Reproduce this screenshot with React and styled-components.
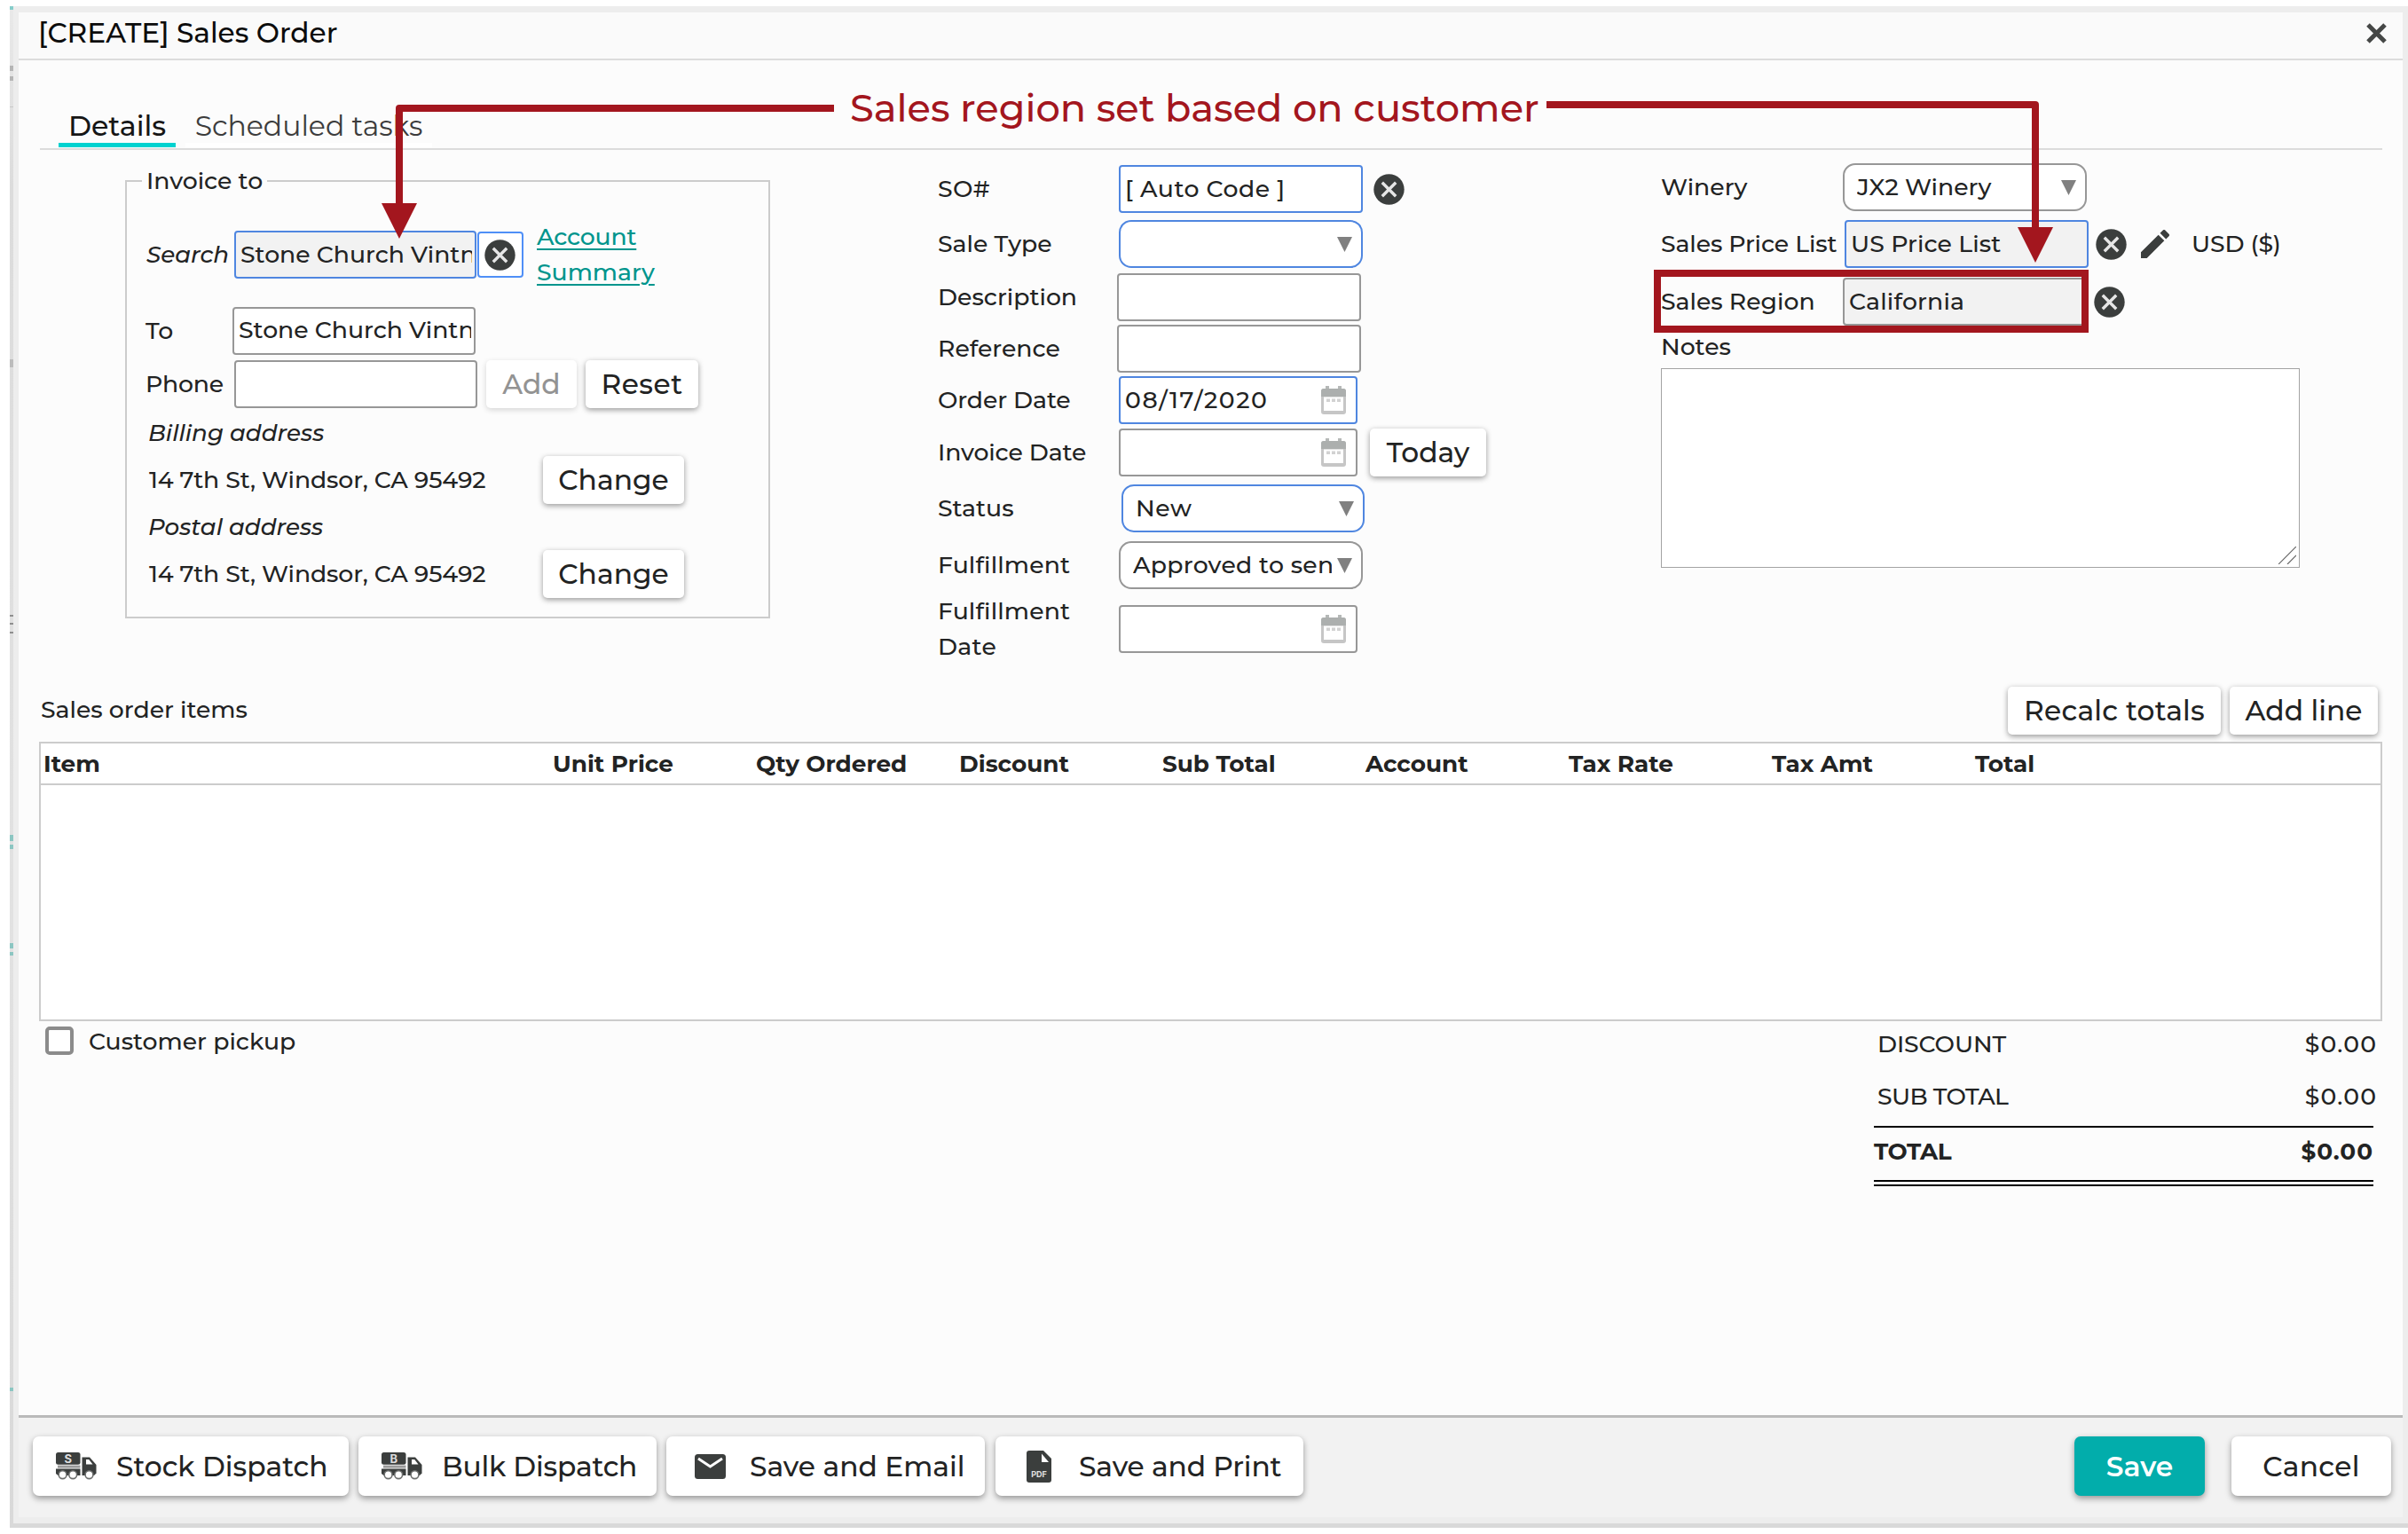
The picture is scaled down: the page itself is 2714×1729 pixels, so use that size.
import React from 'react';
import styled, { createGlobalStyle } from 'styled-components';

const GlobalStyle = createGlobalStyle`
  *, *::before, *::after { box-sizing: border-box; }
  body { margin: 0; background: #fff; }
`;

const RED = '#a3161e';
const INK = '#222323';
const BLUE = '#4f86e0';
const ICON = '#3b3e3d';

/* ---------- shell ---------- */
const Page = styled.div`
  position: relative;
  width: 2714px;
  height: 1729px;
  padding: 7px 0 7px 11px;
  overflow: hidden;
  font-family: "Montserrat", "Inter", "Open Sans", sans-serif;
  font-size: 26.7px;
  font-weight: 500;
  color: ${INK};
`;
const Backdrop = styled.div`
  height: 1715px;
  padding: 0 0 5px 4px;
  background: linear-gradient(#e9e9e9, #dcdcdc 12%, #e2e2e2 60%, #d9d9d9);
`;
const EdgeMark = styled.i`
  position: absolute;
  left: 11px;
  width: 4px;
  top: ${(p) => p.$y}px;
  height: ${(p) => p.$h}px;
  background: ${(p) => p.$c};
`;
const Dialog = styled.div`
  display: flex;
  flex-direction: column;
  height: 1710px;
  border: solid #ededed;
  border-width: 7px 6px;
  background: #fcfcfc;
`;
const TitleBar = styled.header`
  display: flex;
  justify-content: space-between;
  align-items: center;
  height: 54px;
  padding: 0 18px 6px 22px;
  border-bottom: 2px solid #dcdcdc;
  background: #fafafa;
  color: #0c0c0c;
  font-size: 31.2px;
`;
const Body = styled.main`
  flex: 1;
  padding: 0 23px;
`;
const T = styled.span`
  letter-spacing: ${(p) => p.$ls || 0}px;
  margin-right: ${(p) => -(p.$ls || 0)}px;
  white-space: nowrap;
`;

/* ---------- tabs ---------- */
const Tabs = styled.nav`
  display: flex;
  align-items: flex-end;
  gap: 11px;
  height: 101px;
  margin-left: 1px;
  padding: 0 0 1px 21px;
  border-bottom: 2px solid #dcdcdc;
`;
const Tab = styled.div`
  width: ${(p) => p.$w}px;
  height: 43px;
  line-height: 38px;
  font-size: ${(p) => (p.$active ? 31.6 : 31.5)}px;
  text-align: center;
  font-weight: ${(p) => (p.$active ? 500 : 450)};
  color: ${(p) => (p.$active ? '#161616' : '#3c3c3c')};
  border-bottom: 5px solid ${(p) => (p.$active ? '#00d2d0' : '#fff')};
`;

/* ---------- form ---------- */
const Columns = styled.section`
  display: flex;
  height: 605px;
  padding-left: 97px;
`;
const Fieldset = styled.fieldset`
  width: 727px;
  height: 513px;
  min-width: 0;
  margin: 15px 0 0;
  padding: 0 0 0 21px;
  border: 2px solid #ccc;
`;
const Legend = styled.legend`
  height: 40px;
  line-height: 40px;
  margin-left: -4px;
  padding: 0 5px;
`;
const Column = styled.div`
  width: ${(p) => p.$w}px;
  margin-left: ${(p) => p.$ml}px;
`;
const Row = styled.div`
  display: flex;
  align-items: center;
  height: ${(p) => p.$h || 54}px;
  margin-top: ${(p) => p.$mt || 0}px;
`;
const Label = styled.div`
  flex: none;
  width: ${(p) => (p.$w ? `${p.$w}px` : 'auto')};
  padding-left: ${(p) => (p.$pl === undefined ? 1 : p.$pl)}px;
  line-height: 40px;
  font-size: ${(p) => (p.$italic ? '26.2px' : 'inherit')};
  font-style: ${(p) => (p.$italic ? 'italic' : 'normal')};
  letter-spacing: ${(p) => p.$ls || 0}px;
  white-space: nowrap;
`;
const Field = styled.div`
  flex: none;
  display: flex;
  align-items: center;
  justify-content: space-between;
  width: ${(p) => p.$w || 275}px;
  height: 54px;
  padding: 0 3px 0 ${(p) => (p.$select ? 14 : 5)}px;
  border: 2px solid ${(p) => (p.$blue ? BLUE : '#979797')};
  border-radius: ${(p) => (p.$select ? 14 : 4)}px;
  background: ${(p) => (p.$locked ? '#f2f2f2' : '#fff')};
`;
const Value = styled.span`
  flex: 1;
  overflow: hidden;
  padding-bottom: 1px;
  line-height: 44px;
  letter-spacing: ${(p) => p.$ls || 0}px;
  white-space: pre;
`;
const FieldIcon = styled.span`
  flex: none;
  display: flex;
  margin: 0 ${(p) => p.$r}px 0 6px;
`;
const IconBox = styled.span`
  flex: none;
  display: flex;
  margin-left: ${(p) => p.$ml || 0}px;
`;
const ClearButton = styled.button`
  display: flex;
  align-items: center;
  justify-content: center;
  width: 52px;
  height: 52px;
  margin-left: 1px;
  padding: 0 2px 0 0;
  border: 2px solid #4f8ff7;
  border-radius: 4px;
  background: #fff;
`;
const AccountLink = styled.a`
  width: 140px;
  margin-left: 15px;
  line-height: 40px;
  color: #00958d;
  text-decoration: underline;
  text-decoration-thickness: 2px;
  text-underline-offset: 4px;
`;
const Button = styled.button`
  flex: none;
  width: ${(p) => p.$w}px;
  height: 54px;
  margin-left: ${(p) => p.$ml || 0}px;
  padding: 0;
  border: 0;
  border-radius: 5px;
  background: #fff;
  box-shadow: 0 2px 6px rgba(0, 0, 0, ${(p) => (p.disabled ? 0.16 : 0.4)});
  color: ${(p) => (p.disabled ? '#939393' : INK)};
  font: inherit;
  font-size: 31.3px;
  letter-spacing: ${(p) => p.$ls || 0}px;
  white-space: nowrap;
`;
const Notes = styled.div`
  display: flex;
  justify-content: flex-end;
  align-items: flex-end;
  width: 720px;
  height: 225px;
  margin: 4px 0 0 1px;
  padding: 3px;
  border: 1px solid #a3a3a3;
  background: #fff;
`;

/* ---------- items ---------- */
const ItemsHead = styled.div`
  display: flex;
  align-items: center;
  height: 54px;
  padding: 0 5px 0 1px;
`;
const SectionTitle = styled(Label)`
  padding-bottom: 3px;
`;
const Spacer = styled.div`
  flex: 1;
`;
const Table = styled.div`
  height: 315px;
  margin-top: 8px;
  border: 2px solid #ccc;
  background: #fff;
`;
const TableHead = styled.div`
  display: grid;
  grid-template-columns: 574px repeat(8, 229px);
  align-items: center;
  height: 47px;
  padding-left: 3px;
  border-bottom: 2px solid #ccc;
  font-size: 26.3px;
  font-weight: 700;
`;
const Summary = styled.div`
  display: flex;
  justify-content: space-between;
  padding: 0 7px;
`;
const Pickup = styled.label`
  display: flex;
  align-items: center;
  gap: 17px;
  height: 32px;
  margin-top: 6px;
`;
const Checkbox = styled.span`
  width: 32px;
  height: 32px;
  border: 4px solid #8b8b8b;
  border-radius: 5px;
  background: #fff;
`;
const Totals = styled.div`
  width: 566px;
`;
const TotalRow = styled.div`
  display: flex;
  justify-content: space-between;
  height: 40px;
  line-height: 40px;
  margin-top: ${(p) => p.$mt}px;
  padding-left: 4px;
`;
const GrandTotal = styled.div`
  display: flex;
  justify-content: space-between;
  width: 563px;
  height: 68px;
  margin-top: 13px;
  padding-right: 1px;
  line-height: 54px;
  border-top: 2px solid #000;
  border-bottom: 7px double #000;
  font-size: 26.3px;
  font-weight: 700;
`;

/* ---------- footer ---------- */
const Footer = styled.footer`
  display: flex;
  height: 115px;
  padding: 21px 13px 0 16px;
  border-top: 3px solid #bababa;
  background: #f2f2f2;
`;
const Action = styled.button`
  flex: none;
  display: flex;
  align-items: center;
  justify-content: ${(p) => (p.$center ? 'center' : 'flex-start')};
  width: ${(p) => p.$w}px;
  height: 67px;
  margin-right: ${(p) => p.$mr || 0}px;
  padding: 0;
  border: 0;
  border-radius: 7px;
  background: ${(p) => (p.$primary ? '#02adab' : '#fff')};
  box-shadow: 0 3px 7px rgba(0, 0, 0, 0.38);
  color: ${(p) => (p.$primary ? '#fff' : INK)};
  font: inherit;
  font-size: 31.3px;
  font-weight: ${(p) => (p.$primary ? 650 : 500)};
  letter-spacing: ${(p) => p.$ls || 0}px;
  white-space: nowrap;
`;
const ActionIcon = styled.span`
  display: flex;
  justify-content: center;
  width: 46px;
  margin: 0 22px 0 26px;
`;

/* ---------- callout drawn over the dialog ---------- */
const Callout = styled.div`
  position: absolute;
  left: 958px;
  top: 97px;
  line-height: 50px;
  font-size: 43.1px;
  color: ${RED};
  white-space: nowrap;
`;
const Arrows = styled.svg`
  position: absolute;
  left: 0;
  top: 0;
  pointer-events: none;
`;
const Highlight = styled.div`
  position: absolute;
  left: 1864px;
  top: 304px;
  width: 490px;
  height: 71px;
  border: 8px solid ${RED};
`;

/* ---------- icons ---------- */
const ClearIcon = () => (
  <svg width="35" height="35" viewBox="0 0 35 35">
    <circle cx="17.5" cy="17.5" r="17.2" fill={ICON} />
    <path d="M9.8 9.8 25.2 25.2M25.2 9.8 9.8 25.2" stroke="#e6e6e6" strokeWidth="3.4" />
  </svg>
);
const CloseIcon = () => (
  <svg width="23" height="23" viewBox="0 0 23 23">
    <path d="M2 2 21 21M21 2 2 21" stroke="#454746" strokeWidth="5" />
  </svg>
);
const PencilIcon = () => (
  <svg width="32" height="32" viewBox="3 3 18 18" fill={ICON}>
    <path d="M3 17.25V21h3.75L17.81 9.94l-3.75-3.75L3 17.25zM20.71 7.04a1 1 0 0 0 0-1.41l-2.34-2.34a1 1 0 0 0-1.41 0l-1.83 1.83 3.75 3.75 1.83-1.83z" />
  </svg>
);
const Caret = () => (
  <svg width="17" height="17" viewBox="0 0 17 17">
    <path d="M0 0h17L8.5 17z" fill="#808080" />
  </svg>
);
const CalendarIcon = () => (
  <svg width="28" height="32" viewBox="0 0 28 32">
    <path d="M5 0h4v4H5zM19 0h4v4h-4z" fill="#b5b8b7" />
    <path d="M3 3h22a3 3 0 0 1 3 3v23a3 3 0 0 1-3 3H3a3 3 0 0 1-3-3V6a3 3 0 0 1 3-3z" fill="#c6c6c6" />
    <path d="M3 3h22a3 3 0 0 1 3 3v6H0V6a3 3 0 0 1 3-3z" fill="#acafae" />
    <path d="M3 12.5h22V28H3z" fill="#fff" />
    <path d="M6 14.5h4v3.5H6zM12 14.5h4v3.5h-4zM18 14.5h4v3.5h-4z" fill="#d2d2d2" />
  </svg>
);
const TruckIcon = ({ mark }) => (
  <svg width="46" height="31" viewBox="0 0 46 31" fill={ICON}>
    <rect width="27.5" height="13.8" rx="2.5" />
    <text x="13.8" y="11.6" fill="#dcdcdc" fontSize="13" fontWeight="700" textAnchor="middle" fontFamily="Inter, sans-serif">{mark}</text>
    <path d="M2 14.6h25.5v3H2z" fill="#9a9a9a" />
    <path d="M0 18.4h27.5V26H2.5L0 24z" />
    <path d="M29.5 5.5H38l7.5 8.5v9.5L43 26H29.5z" />
    <path d="M34 8h3.2l4.3 5.6H34z" fill="#fff" />
    <g fill="#fff" stroke="#6d6f6e" strokeWidth="1.6">
      <circle cx="7.6" cy="25.2" r="4.4" />
      <circle cx="19.2" cy="25.2" r="4.4" />
      <circle cx="37.5" cy="25.2" r="4.4" />
    </g>
  </svg>
);
const MailIcon = () => (
  <svg width="35" height="28" viewBox="0 0 35 28">
    <rect width="35" height="28" rx="3.5" fill={ICON} />
    <path d="M4 5 17.5 14 31 5" fill="none" stroke="#fff" strokeWidth="3" />
  </svg>
);
const PdfIcon = () => (
  <svg width="28" height="36" viewBox="0 0 28 36">
    <path d="M3 0h16l9 9v24a3 3 0 0 1-3 3H3a3 3 0 0 1-3-3V3a3 3 0 0 1 3-3z" fill={ICON} />
    <path d="M17 3.5V13h8z" fill="#fff" />
    <text x="14" y="30" fill="#e0e0e0" fontSize="9" fontWeight="700" textAnchor="middle" fontFamily="Inter, sans-serif">PDF</text>
  </svg>
);

/* ---------- composed parts ---------- */
const Select = ({ value = '', ls, blue, w }) => (
  <Field $select $blue={blue} $w={w}>
    <Value $ls={ls}>{value}</Value>
    <FieldIcon $r={7}><Caret /></FieldIcon>
  </Field>
);
const TextField = ({ value = '', ls, ...rest }) => (
  <Field {...rest}><Value $ls={ls}>{value}</Value></Field>
);
const DateField = ({ value = '', blue }) => (
  <Field $w={269} $blue={blue}>
    <Value $ls={1.6}>{value}</Value>
    <FieldIcon $r={8}><CalendarIcon /></FieldIcon>
  </Field>
);

const HEADS = ['Item', 'Unit Price', 'Qty Ordered', 'Discount', 'Sub Total', 'Account', 'Tax Rate', 'Tax Amt', 'Total'];
const MARKS = [
  [7, 4, '#86cdca'], [74, 6, '#b5b5b5'], [86, 5, '#b5b5b5'], [120, 1, '#c8c8c8'], [405, 9, '#bcbcbc'],
  [693, 2, '#8f8f8f'], [702, 2, '#8f8f8f'], [712, 2, '#8f8f8f'], [941, 7, '#8cc6c2'], [952, 5, '#8cc6c2'],
  [1063, 6, '#8cc6c2'], [1073, 4, '#8cc6c2'], [1564, 4, '#8cc6c2'],
];

export default function App() {
  return (
    <Page>
      <GlobalStyle />
      <Backdrop>
        <Dialog>
          <TitleBar>
            <T>[CREATE] Sales Order</T>
            <CloseIcon />
          </TitleBar>
          <Body>
            <Tabs>
              <Tab $w={132} $active>Details</Tab>
              <Tab $w={278}>Scheduled tasks</Tab>
            </Tabs>

            <Columns>
              <Fieldset>
                <Legend>Invoice to</Legend>
                <Row $h={80} $mt={23}>
                  <Label $w={100} $italic>Search</Label>
                  <TextField $w={273} $blue $locked value="Stone Church Vintn" />
                  <ClearButton><ClearIcon /></ClearButton>
                  <AccountLink><T $ls={-0.2}>Account</T><br /><T>Summary</T></AccountLink>
                </Row>
                <Row $mt={19} $h={53}>
                  <Label $w={98} $pl={0}>To</Label>
                  <TextField $w={274} value="Stone Church Vintn" />
                </Row>
                <Row $mt={7}>
                  <Label $w={100} $pl={0} $ls={-0.2}>Phone</Label>
                  <TextField $w={274} />
                  <Button $w={102} $ml={10} disabled>Add</Button>
                  <Button $w={127} $ml={10} $ls={0.5}>Reset</Button>
                </Row>
                <Row $h={40} $mt={8}><Label $italic $pl={3}>Billing address</Label></Row>
                <Row $mt={6}>
                  <Label $w={448} $pl={4} $ls={-0.1}>14 7th St, Windsor, CA 95492</Label>
                  <Button $w={159}>Change</Button>
                </Row>
                <Row $h={40} $mt={6}><Label $italic $pl={3}>Postal address</Label></Row>
                <Row $mt={6}>
                  <Label $w={448} $pl={4} $ls={-0.1}>14 7th St, Windsor, CA 95492</Label>
                  <Button $w={159}>Change</Button>
                </Row>
              </Fieldset>

              <Column $ml={188} $w={640}>
                <Row $mt={17}>
                  <Label $w={205} $ls={0.4}>SO#</Label>
                  <TextField $blue ls={0.5} value="[ Auto Code ]" />
                  <IconBox $ml={12}><ClearIcon /></IconBox>
                </Row>
                <Row $mt={8}><Label $w={205}>Sale Type</Label><Select blue /></Row>
                <Row $mt={6}><Label $w={203}>Description</Label><TextField /></Row>
                <Row $mt={4}><Label $w={203}>Reference</Label><TextField /></Row>
                <Row $mt={4}><Label $w={205} $ls={-0.1}>Order Date</Label><DateField blue value="08/17/2020" /></Row>
                <Row $mt={5}>
                  <Label $w={205} $ls={-0.1}>Invoice Date</Label>
                  <DateField />
                  <Button $w={131} $ml={14}>Today</Button>
                </Row>
                <Row $mt={9}><Label $w={208}>Status</Label><Select blue value="New" ls={0.6} w={274} /></Row>
                <Row $mt={10}><Label $w={205} $ls={0.15}>Fulfillment</Label><Select value="Approved to sen" ls={0.3} /></Row>
                <Row $h={80} $mt={5}>
                  <Label $w={205}><T $ls={0.15}>Fulfillment</T><br /><T $ls={0.3}>Date</T></Label>
                  <DateField />
                </Row>
              </Column>

              <Column $ml={175} $w={760}>
                <Row $mt={15}><Label $w={206}>Winery</Label><Select value="JX2 Winery" /></Row>
                <Row $mt={10}>
                  <Label $w={208} $ls={-0.1}>Sales Price List</Label>
                  <TextField $blue $locked ls={0.1} value="US Price List" />
                  <IconBox $ml={8}><ClearIcon /></IconBox>
                  <IconBox $ml={16}><PencilIcon /></IconBox>
                  <IconBox $ml={24}><Label $ls={-0.1}>USD ($)</Label></IconBox>
                </Row>
                <Row $mt={11}>
                  <Label $w={206}>Sales Region</Label>
                  <TextField $locked ls={0.2} value="California" />
                  <IconBox $ml={8}><ClearIcon /></IconBox>
                </Row>
                <Row $h={40} $mt={4}><Label>Notes</Label></Row>
                <Notes>
                  <svg width="20" height="20" viewBox="0 0 20 20">
                    <path d="M0 20 20 0M10 20 20 10" stroke="#666" strokeWidth="1.2" />
                  </svg>
                </Notes>
              </Column>
            </Columns>

            <ItemsHead>
              <SectionTitle>Sales order items</SectionTitle>
              <Spacer />
              <Button $w={240} $ls={0.2}>Recalc totals</Button>
              <Button $w={167} $ml={10}>Add line</Button>
            </ItemsHead>
            <Table>
              <TableHead>
                {HEADS.map((text) => <T key={text}>{text}</T>)}
              </TableHead>
            </Table>

            <Summary>
              <Pickup><Checkbox /><T>Customer pickup</T></Pickup>
              <Totals>
                <TotalRow $mt={6}><T $ls={-0.1}>DISCOUNT</T><T $ls={1.2}>$0.00</T></TotalRow>
                <TotalRow $mt={19}><T $ls={-0.6}>SUB TOTAL</T><T $ls={1.2}>$0.00</T></TotalRow>
                <GrandTotal><T $ls={-0.4}>TOTAL</T><T $ls={1}>$0.00</T></GrandTotal>
              </Totals>
            </Summary>
          </Body>

          <Footer>
            <Action $w={356} $mr={11}><ActionIcon><TruckIcon mark="S" /></ActionIcon>Stock Dispatch</Action>
            <Action $w={336} $mr={11} $ls={-0.2}><ActionIcon><TruckIcon mark="B" /></ActionIcon>Bulk Dispatch</Action>
            <Action $w={359} $mr={12}><ActionIcon><MailIcon /></ActionIcon>Save and Email</Action>
            <Action $w={347} $ls={-0.1}><ActionIcon><PdfIcon /></ActionIcon>Save and Print</Action>
            <Spacer />
            <Action $w={147} $mr={30} $center $primary>Save</Action>
            <Action $w={180} $center $ls={0.3}>Cancel</Action>
          </Footer>
        </Dialog>
      </Backdrop>

      {MARKS.map(([y, h, c]) => <EdgeMark key={y} $y={y} $h={h} $c={c} />)}

      <Highlight />
      <Callout>Sales region set based on customer</Callout>
      <Arrows width="2714" height="400" viewBox="0 0 2714 400">
        <g fill="none" stroke={RED} strokeWidth="8" strokeLinejoin="round">
          <path d="M940 122H450V232" />
          <path d="M1743 118H2294V260" />
        </g>
        <path d="M430 229h40l-20 40zM2274 256h40l-20 40z" fill={RED} />
      </Arrows>
    </Page>
  );
}
